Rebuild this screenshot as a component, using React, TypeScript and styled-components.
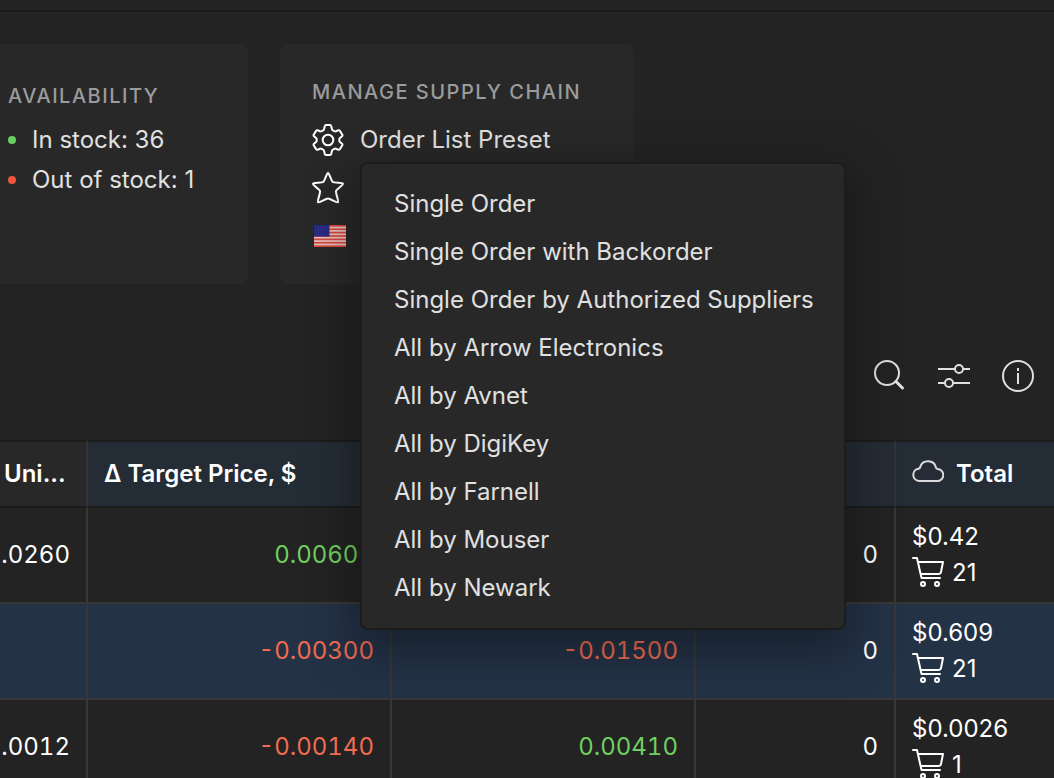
import React from "react";
import styled, { createGlobalStyle } from "styled-components";

const GlobalStyle = createGlobalStyle`
  * { box-sizing: border-box; }
  html, body { margin: 0; background: #232323; }
  body {
    font-family: Inter, "Liberation Sans", sans-serif;
    font-size: 24px;
    line-height: 32px;
    color: #e0e0e0;
    -webkit-font-smoothing: antialiased;
  }
  button { font: inherit; color: inherit; background: none; border: 0; padding: 0; cursor: pointer; }
  svg { display: block; flex: none; }
`;

const Page = styled.div`
  height: 100vh;
  overflow: hidden;
  display: flex;
  flex-direction: column;
`;

const TopBar = styled.header`
  flex: none;
  height: 12px;
  background: #242424;
  border-bottom: 2px solid #1b1b1b;
`;

const Summary = styled.section`
  flex: none;
  display: flex;
  gap: 32px;
  padding-top: 32px;
`;

const Card = styled.section<{ $cut?: boolean }>`
  width: ${(p) => (p.$cut ? 248 : 354)}px;
  height: 240px;
  padding: ${(p) => (p.$cut ? "36px 32px 0 8px" : "32px 32px 0")};
  border-radius: ${(p) => (p.$cut ? "0 8px 8px 0" : "8px")};
  background: #282828;
`;

const CardTitle = styled.h2`
  margin: 0;
  font-size: 20px;
  line-height: 32px;
  font-weight: 500;
  letter-spacing: 0.075em;
  color: #9b9b9b;
  white-space: nowrap;
`;

const StockList = styled.ul`
  list-style: none;
  margin: 8px 0 0;
  padding: 0;
`;

const StockItem = styled.li<{ $color: string }>`
  display: flex;
  align-items: center;
  gap: 16px;
  height: 40px;
  white-space: nowrap;
  &::before {
    content: "";
    width: 8px;
    height: 8px;
    border-radius: 50%;
    background: ${(p) => p.$color};
  }
`;

const Actions = styled.div`
  display: flex;
  flex-direction: column;
  margin-top: 8px;
`;

const ActionRow = styled.div`
  position: relative;
  display: flex;
  align-items: center;
  height: 48px;
`;

const ActionButton = styled.button`
  display: flex;
  align-items: center;
  gap: 16px;
  white-space: nowrap;
`;

const Menu = styled.ul`
  position: absolute;
  z-index: 5;
  top: 48px;
  left: 50px;
  margin: 0;
  padding: 16px 0;
  list-style: none;
  background: #282828;
  border-radius: 6px;
  box-shadow: 0 0 0 2px #1c1c1c, 0 16px 48px 8px rgba(0, 0, 0, 0.35);
`;

const MenuItem = styled.button`
  display: block;
  width: 100%;
  height: 48px;
  padding: 0 30px 0 32px;
  text-align: left;
  white-space: nowrap;
`;

const Toolbar = styled.div`
  flex: none;
  display: flex;
  justify-content: flex-end;
  align-items: center;
  gap: 32px;
  height: 156px;
  padding: 28px 20px 0 0;
`;

const IconButton = styled.button`
  width: 32px;
  height: 32px;
`;

const Grid = styled.table`
  flex: none;
  width: 100%;
  table-layout: fixed;
  border-spacing: 0;
  color: #ffffff;
`;

const HeadCell = styled.th<{ $tint?: boolean }>`
  height: 68px;
  padding: 0 16px;
  border: 2px solid #1b1b1b;
  border-left: 0;
  border-right: 2px solid #333333;
  background: ${(p) => (p.$tint ? "#242c35" : "#282828")};
  text-align: left;
  font-weight: 600;
  white-space: nowrap;
  &:first-child { padding: 0 4px; }
  &:last-child { border-right: 0; }
`;

const HeadLabel = styled.span`
  display: flex;
  align-items: center;
  gap: 12px;
`;

const Row = styled.tr<{ $selected?: boolean }>`
  background: ${(p) => (p.$selected ? "#243246" : "#232323")};
`;

const Cell = styled.td<{ $tone?: Tone }>`
  height: 96px;
  padding: 0 16px;
  border-right: 2px solid #373737;
  border-bottom: 2px solid #373737;
  text-align: right;
  white-space: nowrap;
  font-variant-numeric: tabular-nums;
  color: ${(p) => (p.$tone === "up" ? "#6fcf5f" : p.$tone === "down" ? "#ef6c50" : "#ffffff")};
  &:first-child { padding-left: 0; }
`;

const TotalCell = styled.td`
  height: 96px;
  padding: 0 16px;
  border-bottom: 2px solid #373737;
  line-height: 36px;
`;

const CartLine = styled.div`
  display: flex;
  align-items: center;
  gap: 8px;
`;

const stroke = { fill: "none", stroke: "currentColor", strokeLinecap: "round", strokeLinejoin: "round" } as const;

const GearIcon = () => (
  <svg width="32" height="32" viewBox="0 0 32 32" {...stroke} stroke="#fff" strokeWidth="2" aria-hidden="true">
    <path d="M14 1h4Q19 1 19.200 2L19.900 5Q20.200 6.200 21.300 6.700L22.300 7.200Q23.200 7.600 24 7.200L26.300 6.300Q27.300 6 27.900 6.900L30.300 10.700Q30.800 11.600 30 12.300L28 14Q27.300 14.700 27.300 15.500V16.500Q27.300 17.300 28 18L30 19.700Q30.800 20.400 30.300 21.300L27.900 25.100Q27.300 26 26.300 25.700L24 24.800Q23.200 24.400 22.300 24.800L21.300 25.300Q20.200 25.800 19.900 27L19.200 30Q19 31 18 31H14Q13 31 12.800 30L12.100 27Q11.800 25.800 10.700 25.300L9.700 24.800Q8.800 24.400 8 24.800L5.700 25.700Q4.700 26 4.100 25.100L1.700 21.300Q1.200 20.400 2 19.700L4 18Q4.700 17.300 4.700 16.500V15.500Q4.700 14.700 4 14L2 12.300Q1.200 11.600 1.700 10.700L4.100 6.900Q4.700 6 5.700 6.300L8 7.200Q8.800 7.600 9.700 7.200L10.700 6.700Q11.800 6.200 12.100 5L12.800 2Q13 1 14 1Z" />
    <circle cx="16" cy="16" r="5.300" />
  </svg>
);

const StarIcon = () => (
  <svg width="32" height="32" viewBox="0 0 32 32" {...stroke} stroke="#fff" strokeWidth="2" aria-hidden="true">
    <path d="M16 1C17.200 1 19.300 8.700 20.500 9.800C22 11.200 30.600 10.400 31 11.700C31.300 13 24.600 17.300 24 19C23.400 21 27 29.300 26 30.200C24.800 31.200 18 26.500 16 26.500S7.200 31.200 6 30.200C5 29.300 8.600 21 8 19C7.400 17.300 .7 13 1 11.700C1.400 10.400 10 11.200 11.500 9.800C12.700 8.700 14.800 1 16 1Z" />
  </svg>
);

const FlagIcon = () => (
  <svg width="34" height="22" viewBox="-2 0 34 22" aria-hidden="true">
    <rect width="32" height="22" fill="#e9c0bc" />
    {[0, 1, 2, 3, 4, 5, 6].map((i) => (
      <rect key={i} y={i * 3.38} width="32" height="1.700" fill="#d24a40" />
    ))}
    <rect width="15.500" height="11.500" fill="#25267e" />
    {[2, 4.500, 7, 9.500].map((y) => (
      <path key={y} d={`M1.500 ${y}h13`} stroke="#444a9b" strokeWidth="1" strokeDasharray="1 1.500" />
    ))}
  </svg>
);

const SearchIcon = () => (
  <svg width="32" height="32" viewBox="2 0 32 32" {...stroke} strokeWidth="2" aria-hidden="true">
    <circle cx="15" cy="13" r="12" />
    <path d="m24 21.500 6.500 6.500" strokeWidth="3" />
  </svg>
);

const SlidersIcon = () => (
  <svg width="32" height="32" viewBox="0 0 32 32" {...stroke} strokeWidth="2" strokeLinecap="butt" aria-hidden="true">
    <path d="M0 9h17M25 9h7M0 23h7M15 23h17" />
    <circle cx="21" cy="9" r="4" />
    <circle cx="11" cy="23" r="4" />
  </svg>
);

const InfoIcon = () => (
  <svg width="32" height="32" viewBox="0 0 32 32" {...stroke} strokeWidth="2" strokeLinecap="butt" aria-hidden="true">
    <circle cx="16" cy="16" r="15" />
    <path d="M16 13v11M16 8v3" />
  </svg>
);

const CloudIcon = () => (
  <svg width="32" height="28" viewBox="0 0 32 28" {...stroke} stroke="#dcdcdc" strokeWidth="2" aria-hidden="true">
    <path d="M7 21A6.200 6.200 0 0 1 6.500 8.700Q8 8.500 8.200 7A8.200 8.200 0 0 1 24 7.500Q24.200 8.800 25.500 9A6 6 0 0 1 25 21Z" />
  </svg>
);

const CartIcon = () => (
  <svg width="32" height="32" viewBox="0 0 32 32" {...stroke} strokeWidth="2" aria-hidden="true">
    <path d="M1 1h4L9.500 21H28M6 5H31L29 15Q28.600 17 27 17H9" />
    <circle cx="11" cy="27" r="2" />
    <circle cx="25" cy="27" r="2" />
  </svg>
);

type Tone = "up" | "down";
type Value = { text: string; tone?: Tone };

const presets = [
  "Single Order",
  "Single Order with Backorder",
  "Single Order by Authorized Suppliers",
  "All by Arrow Electronics",
  "All by Avnet",
  "All by DigiKey",
  "All by Farnell",
  "All by Mouser",
  "All by Newark",
];

const rows: { values: Value[]; total: string; count: number; selected?: boolean }[] = [
  { values: [{ text: ".0260" }, { text: "0.00600", tone: "up" }, { text: "" }, { text: "0" }], total: "$0.42", count: 21 },
  {
    values: [{ text: "" }, { text: "-0.00300", tone: "down" }, { text: "-0.01500", tone: "down" }, { text: "0" }],
    total: "$0.609",
    count: 21,
    selected: true,
  },
  {
    values: [{ text: ".0012" }, { text: "-0.00140", tone: "down" }, { text: "0.00410", tone: "up" }, { text: "0" }],
    total: "$0.0026",
    count: 1,
  },
];

export default function App() {
  return (
    <Page>
      <GlobalStyle />
      <TopBar />
      <Summary>
        <Card $cut>
          <CardTitle>AVAILABILITY</CardTitle>
          <StockList>
            <StockItem $color="#66d062">In stock: 36</StockItem>
            <StockItem $color="#f0553f">Out of stock: 1</StockItem>
          </StockList>
        </Card>
        <Card>
          <CardTitle>MANAGE SUPPLY CHAIN</CardTitle>
          <Actions>
            <ActionRow>
              <ActionButton aria-haspopup="menu" aria-expanded="true">
                <GearIcon />
                Order List Preset
              </ActionButton>
              <Menu>
                {presets.map((name) => (
                  <li key={name}>
                    <MenuItem>{name}</MenuItem>
                  </li>
                ))}
              </Menu>
            </ActionRow>
            <ActionRow>
              <ActionButton aria-label="Favorites"><StarIcon /></ActionButton>
            </ActionRow>
            <ActionRow>
              <ActionButton aria-label="Region"><FlagIcon /></ActionButton>
            </ActionRow>
          </Actions>
        </Card>
      </Summary>
      <Toolbar>
        <IconButton aria-label="Search"><SearchIcon /></IconButton>
        <IconButton aria-label="Filters"><SlidersIcon /></IconButton>
        <IconButton aria-label="Info"><InfoIcon /></IconButton>
      </Toolbar>
      <Grid>
        <colgroup>
          <col width="88" />
          <col width="304" />
          <col width="304" />
          <col width="200" />
          <col />
        </colgroup>
        <thead>
          <tr>
            <HeadCell>Uni...</HeadCell>
            <HeadCell $tint>Δ Target Price, $</HeadCell>
            <HeadCell $tint />
            <HeadCell $tint />
            <HeadCell $tint>
              <HeadLabel><CloudIcon />Total</HeadLabel>
            </HeadCell>
          </tr>
        </thead>
        <tbody>
          {rows.map((row) => (
            <Row key={row.total} $selected={row.selected}>
              {row.values.map((value, i) => (
                <Cell key={i} $tone={value.tone}>{value.text}</Cell>
              ))}
              <TotalCell>
                {row.total}
                <CartLine><CartIcon />{row.count}</CartLine>
              </TotalCell>
            </Row>
          ))}
        </tbody>
      </Grid>
    </Page>
  );
}
